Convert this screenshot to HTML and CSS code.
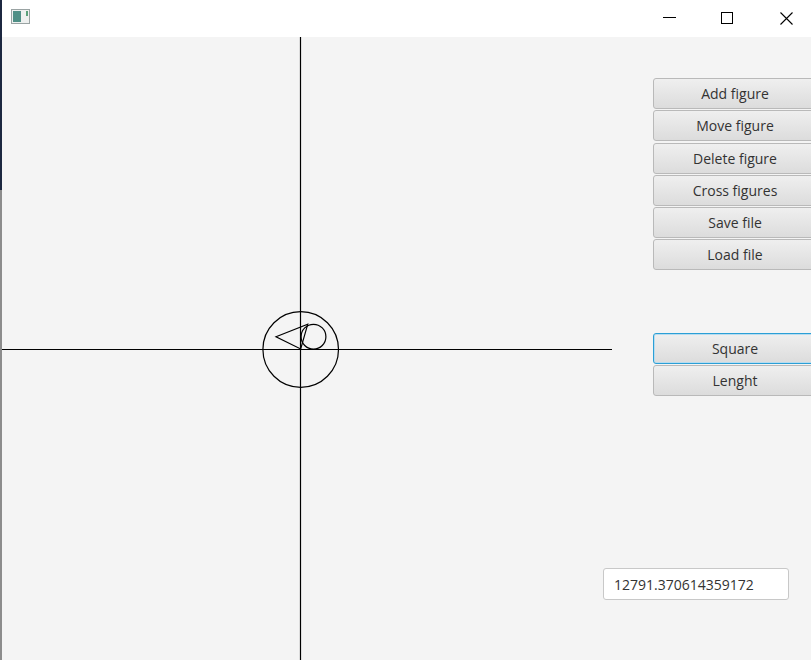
FILE: index.html
```html
<!DOCTYPE html>
<html>
<head>
<meta charset="utf-8">
<link rel="stylesheet" href="styles.css">
</head>
<body>
<div class="window">
  <div class="edge"></div>
  <div class="frame">
    <div class="titlebar">
      <svg class="app-icon" width="20" height="16" viewBox="0 0 20 16">
        <rect x="0.5" y="0.5" width="18" height="14" fill="#eef0ef" stroke="#9aa3a3"/>
        <rect x="2" y="2" width="8" height="11" fill="#4f8f86"/>
        <rect x="15" y="2" width="2" height="5" fill="#5aa07a"/>
      </svg>
      <svg class="controls" width="160" height="37" viewBox="0 0 160 37">
        <line x1="12" y1="17.5" x2="25" y2="17.5" stroke="#000" stroke-width="1"/>
        <rect x="70.5" y="12.5" width="11" height="11" fill="none" stroke="#000" stroke-width="1"/>
        <path d="M129.5 12.5 L141.5 24.5 M141.5 12.5 L129.5 24.5" stroke="#000" stroke-width="1.1"/>
      </svg>
    </div>
    <div class="content">
      <svg class="canvas" width="601" height="623" viewBox="2 37 601 623">
        <line x1="300.5" y1="37" x2="300.5" y2="660" stroke="#000" stroke-width="1.2"/>
        <line x1="2" y1="349.5" x2="612" y2="349.5" stroke="#000" stroke-width="1.2"/>
        <circle cx="300.7" cy="349.5" r="37.8" fill="none" stroke="#000" stroke-width="1.2"/>
        <circle cx="313.5" cy="336.7" r="12.4" fill="none" stroke="#000" stroke-width="1.2"/>
        <polygon points="276,336.7 307.7,324.3 300.7,349" fill="none" stroke="#000" stroke-width="1.2"/>
      </svg>
      <div class="side">
        <div class="line-ext"></div>
        <div class="group">
          <button class="btn">Add figure</button>
          <button class="btn">Move figure</button>
          <button class="btn">Delete figure</button>
          <button class="btn">Cross figures</button>
          <button class="btn">Save file</button>
          <button class="btn">Load file</button>
        </div>
        <div class="group group-mode">
          <button class="btn btn-focus">Square</button>
          <button class="btn">Lenght</button>
        </div>
        <input class="field" type="text" value="12791.370614359172">
      </div>
    </div>
  </div>
</div>
</body>
</html>
```
FILE: styles.css
```css
html, body {
  margin: 0;
  padding: 0;
  width: 811px;
  height: 660px;
  overflow: hidden;
  background: #f4f4f4;
  font-family: "Open Sans", "Noto Sans", sans-serif;
}

.window {
  display: flex;
  width: 811px;
  height: 660px;
}

.edge {
  width: 2px;
  flex: none;
  background: linear-gradient(#1c2740 0, #1c2740 190px, #8c8c8c 190px, #8c8c8c 100%);
}

.frame {
  flex: 1;
  display: flex;
  flex-direction: column;
  min-width: 0;
}

.titlebar {
  height: 37px;
  background: #ffffff;
  display: flex;
  align-items: center;
  justify-content: space-between;
  flex: none;
}

.app-icon {
  margin-left: 9px;
  margin-top: -4px;
}

.controls {
  display: block;
}

.content {
  flex: 1;
  display: flex;
  background: #f4f4f4;
  position: relative;
}

.canvas {
  display: block;
  flex: none;
}

.side {
  flex: none;
  width: 208px;
  display: flex;
  flex-direction: column;
  position: relative;
}

.line-ext {
  position: absolute;
  left: 0;
  top: 312px;
  width: 9px;
  height: 1.2px;
  background: #000;
}

.group {
  display: flex;
  flex-direction: column;
  gap: 1.25px;
  margin-left: 50px;
  margin-top: 41px;
}

.group-mode {
  margin-top: 62.75px;
}

.btn {
  width: 164px;
  height: 31px;
  padding: 0;
  margin: 0;
  border: 1px solid #b9b9b9;
  border-radius: 3px;
  background: linear-gradient(#efefef, #dcdcdc);
  color: #333333;
  font-family: "Open Sans", "Noto Sans", sans-serif;
  font-size: 14px;
  text-align: center;
  box-sizing: border-box;
}

.btn-focus {
  border-color: #2b9fd6;
  box-shadow: inset 0 0 0 1px #b8dcef;
}

.field {
  margin-top: 171.75px;
  width: 186px;
  height: 32px;
  box-sizing: border-box;
  border: 1px solid #c8c8c8;
  border-radius: 3px;
  background: #ffffff;
  padding: 0 0 0 10px;
  font-family: "Open Sans", "Noto Sans", sans-serif;
  font-size: 14px;
  color: #333333;
  outline: none;
}
```
